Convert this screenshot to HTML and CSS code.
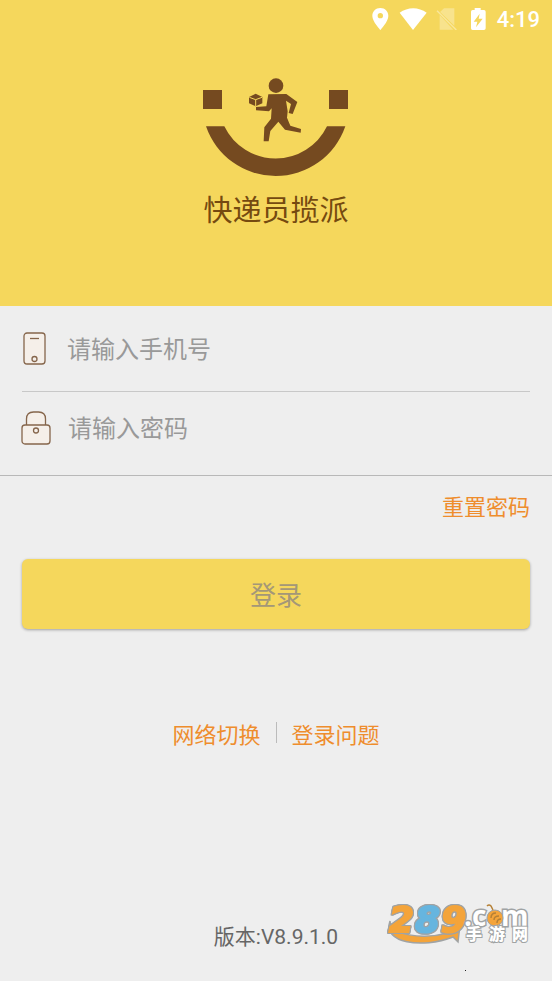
FILE: index.html
```html
<!DOCTYPE html>
<html lang="zh-CN">
<head>
<meta charset="utf-8">
<meta name="viewport" content="width=device-width, initial-scale=1">
<title>快递员揽派</title>
<link rel="stylesheet" href="styles.css">
</head>
<body>
<header class="hero">
  <div class="status">
    <svg width="126" height="26" viewBox="0 0 378 78" aria-hidden="true">
      <path fill="#fff" fill-rule="evenodd" d="M28 12c-14 0-24 10-24 24 0 17 24 42 24 42s24-25 24-42c0-14-10-24-24-24zm0 15a8 8 0 1 1 0 16 8 8 0 0 1 0-16z"/>
      <path fill="#fff" d="M86 26c24-18 57-18 81 0l-41 52z"/>
      <path fill="#fff" opacity=".3" d="M219 13h31v52l-43-41zM206 33l41 44h-41z"/>
      <path stroke="#fff" opacity=".4" stroke-width="4" d="M198 20l58 58"/>
      <path fill="#fff" fill-rule="evenodd" d="M311 12h18v6h10q5 0 5 5v50q0 5-5 5h-34q-5 0-5-5V23q0-5 5-5h6zm15 17-18 24h11l-4 17 20-26h-12z"/>
    </svg>
    <span class="clock">4:19</span>
  </div>
  <svg class="logo" width="170" height="120" viewBox="0 0 510 360" aria-hidden="true">
    <g fill="#754a20">
      <path d="M39 75h57v57H39zM417 75h57v57h-57z"/>
      <path d="M48 184h55a171 171 0 0 0 308 0h55a221 221 0 0 1-418 0z"/>
      <circle cx="258" cy="62" r="22"/>
      <path d="M235 88l54-1 33 24-14 36-12-3 7-27-15-10 5 32-2 19 10 24 32 10-1 11-47-9-20-24-24 28-5 31h-15l2-42 20-26 2-31-8 9-39-3v-10l31-2z"/>
      <path d="M197 86l20 10v19l-20 9-20-9V96z"/>
    </g>
    <path d="M178 97l19 7 19-7M197 104v19" fill="none" stroke="#f5d75c" stroke-width="3"/>
  </svg>
  <h1 class="title">快递员揽派</h1>
</header>
<main>
  <form class="form">
    <div class="field">
      <label for="phone" aria-label="手机号">
        <svg width="28" height="36" viewBox="1 0 28 36" fill="#f5efe9" stroke="#85654b" stroke-width="1.300"><rect x="3" y="2" width="21" height="31" rx="3"/><path d="M9 7.500h9"/><circle cx="13.500" cy="28" r="2.500"/></svg>
      </label>
      <input id="phone" type="tel" placeholder="请输入手机号">
    </div>
    <div class="field password">
      <label for="password" aria-label="密码">
        <svg width="30" height="36" viewBox="0 0 30 36" fill="#f5efe9" stroke="#85654b" stroke-width="1.300"><path d="M5.500 15V9q0-7 7-7h5q7 0 7 7v6"/><rect x="1" y="15" width="28" height="19" rx="3"/><circle cx="15" cy="20.500" r="2.500"/></svg>
      </label>
      <input id="password" type="password" placeholder="请输入密码">
    </div>
    <div class="actions">
      <a class="reset" href="#">重置密码</a>
      <button class="login" type="submit">登录</button>
    </div>
  </form>
  <nav class="links"><a href="#">网络切换</a><a href="#">登录问题</a></nav>
</main>
<footer class="footer">
  <span>版本:V8.9.1.0</span>
  <svg class="mark" width="150" height="90" viewBox="0 -10 150 90" role="img" aria-label="289.com 手游网">
    <path d="M8 20C8 34 40 39 66 32L64 29 78 24 76 41 71 36C40 48 0 42 8 20z" fill="#f4a43a" stroke="#a0a3a4" stroke-width="1.500"/>
    <g class="digits"><text x="7" y="31" fill="#f4a43a" stroke="#f4a43a">2</text><text x="33" y="31" fill="#66b5df" stroke="#66b5df">8</text><text x="59" y="31" fill="#f4a43a" stroke="#f4a43a">9</text></g>
    <g class="domain"><text x="82" y="25">.c</text><text x="119" y="25">m</text></g>
    <circle cx="113" cy="17" r="8" fill="#f4a43a" stroke="#a0a3a4"/>
    <path d="M111 9l-2-4q-2-2-4 0M109 17q0-5 5-5m-2 7q0-4 5-4m-2 7q0-4 4-4" fill="none" stroke="#b58036" stroke-width="1.500"/>
    <g class="site"><text x="84" y="39">手</text><text x="107" y="39">游</text><text x="130" y="39">网</text></g>
    <path d="M83 69h1v1h-1z" fill="#222"/>
  </svg>
</footer>
</body>
</html>
```
FILE: styles.css
```css
* { box-sizing: border-box; }

body {
  margin: 0;
  min-height: 100vh;
  display: flex;
  flex-direction: column;
  background: #eee;
  font-family: Roboto, "Noto Sans CJK SC", sans-serif;
}

a { color: #ee8d2d; text-decoration: none; }

.hero {
  display: flex;
  flex-direction: column;
  align-items: center;
  padding-bottom: 75px;
  background: #f5d75c;
}

.status {
  align-self: stretch;
  display: flex;
  justify-content: flex-end;
  align-items: flex-start;
  height: 65px;
  padding: 4px 12px 0 0;
  color: #fff;
}

.clock {
  margin-top: 4px;
  font-size: 22px;
  line-height: 24px;
  font-weight: 500;
}

.logo { margin-left: -2px; }

.title {
  margin: 6px 0 0;
  color: #754a10;
  font-size: 29px;
  line-height: 40px;
  font-weight: 400;
}

.field {
  display: flex;
  align-items: center;
  height: 86px;
  margin: 0 22px;
  border-bottom: 1px solid #c8c8c8;
}

.field label { display: flex; }

.field input {
  flex: 1;
  min-width: 0;
  padding: 2px 0 0 17px;
  border: 0;
  outline: 0;
  background: transparent;
  color: #444;
  font: inherit;
  font-size: 24px;
  line-height: 36px;
}

.field input::placeholder { color: #999; opacity: 1; }

.password {
  height: 84px;
  margin: 0;
  padding: 0 22px 12px 21px;
  border-color: #b8b8b8;
}

.actions {
  display: flex;
  flex-direction: column;
  padding: 16px 22px 0;
}

.reset {
  align-self: flex-end;
  font-size: 22px;
  line-height: 32px;
}

.login {
  height: 70px;
  margin-top: 35px;
  padding: 0 0 2px;
  border: 0;
  border-radius: 6px;
  background: #f5d75c;
  box-shadow: 0 1px 3px #0005;
  color: #a49778;
  font: inherit;
  font-size: 26px;
}

.links {
  display: flex;
  justify-content: center;
  align-items: center;
  margin-top: 91px;
  font-size: 22px;
  line-height: 32px;
}

.links a + a::before {
  content: "";
  display: inline-block;
  width: 1px;
  height: 21px;
  margin: 0 15px;
  background: #bbb;
}

.footer {
  position: relative;
  margin-top: auto;
  padding-bottom: 28px;
  text-align: center;
  color: #666;
  font-size: 21px;
  line-height: 32px;
}

.mark {
  position: absolute;
  right: 20px;
  bottom: 0;
}

.digits {
  font: italic 700 36px "DejaVu Sans", sans-serif;
  stroke-width: 2px;
  filter: drop-shadow(1px 0 0 #a0a3a4) drop-shadow(-1px 0 0 #a0a3a4) drop-shadow(0 1px 0 #a0a3a4) drop-shadow(0 -1px 0 #a0a3a4);
}

.domain {
  font: 700 28px "Open Sans", sans-serif;
  fill: #fff;
  stroke: #a0a3a4;
  stroke-width: 3px;
  paint-order: stroke;
}

.site {
  font: 900 16px "Noto Sans CJK SC", sans-serif;
  fill: #fff;
  stroke: #a0a3a4;
  stroke-width: 2px;
  paint-order: stroke;
}
```
